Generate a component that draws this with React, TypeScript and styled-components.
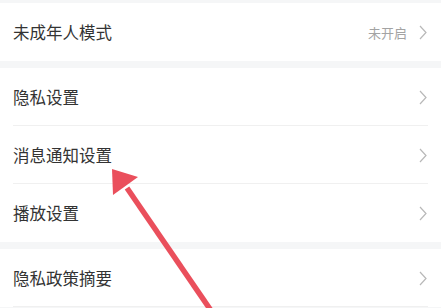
import React from "react";
import styled, { createGlobalStyle } from "styled-components";

const GlobalStyle = createGlobalStyle`
  html, body {
    margin: 0;
    padding: 0;
    background: #f5f6f7;
  }
  body {
    font-family: "Noto Sans CJK SC", "Noto Sans", sans-serif;
  }
`;

type Item = { label: string; value?: string };

const sections: Item[][] = [
  [{ label: "未成年人模式", value: "未开启" }],
  [{ label: "隐私设置" }, { label: "消息通知设置" }, { label: "播放设置" }],
  [{ label: "隐私政策摘要" }],
];

function Chevron() {
  return (
    <svg width="8" height="15" viewBox="0 0 8 15" fill="none">
      <path d="M1 1 L7 7.5 L1 14" stroke="#b8b8b8" strokeWidth="1.2" />
    </svg>
  );
}

function App() {
  return (
    <Page>
      <GlobalStyle />
      {sections.map((items, i) => (
        <Section key={i}>
          {items.map((item, j) => (
            <Row
              key={item.label}
              $divider={j < items.length - 1 || i === sections.length - 1}
            >
              <Label>{item.label}</Label>
              <Right>
                {item.value && <Value>{item.value}</Value>}
                <Chevron />
              </Right>
            </Row>
          ))}
        </Section>
      ))}
      <Arrow width="441" height="308" viewBox="0 0 441 308">
        <line x1="127" y1="188" x2="212" y2="312" stroke="#ea4f5c" strokeWidth="5.5" />
        <polygon points="112,169 138,177 113,195" fill="#ea4f5c" />
      </Arrow>
    </Page>
  );
}

const Page = styled.div`
  position: relative;
  width: 441px;
  height: 308px;
  overflow: hidden;
  padding-top: 3px;
  box-sizing: border-box;
  display: flex;
  flex-direction: column;
  gap: 7px;
`;

const Section = styled.div`
  background: #ffffff;
  display: flex;
  flex-direction: column;
`;

const Row = styled.div<{ $divider: boolean }>`
  height: 58px;
  flex-shrink: 0;
  display: flex;
  align-items: center;
  justify-content: space-between;
  padding: 0 14px 0 13px;
  position: relative;
  ${(p) =>
    p.$divider &&
    `
    &::after {
      content: "";
      position: absolute;
      left: 13px;
      right: 13px;
      bottom: 0;
      height: 1px;
      background: #f0f0f0;
    }
  `}
`;

const Label = styled.span`
  font-size: 16.5px;
  color: #333333;
`;

const Right = styled.div`
  display: flex;
  align-items: center;
  gap: 12px;
`;

const Value = styled.span`
  font-size: 13px;
  color: #a3a3a3;
`;

const Arrow = styled.svg`
  position: absolute;
  left: 0;
  top: 0;
  pointer-events: none;
`;

export default App;
